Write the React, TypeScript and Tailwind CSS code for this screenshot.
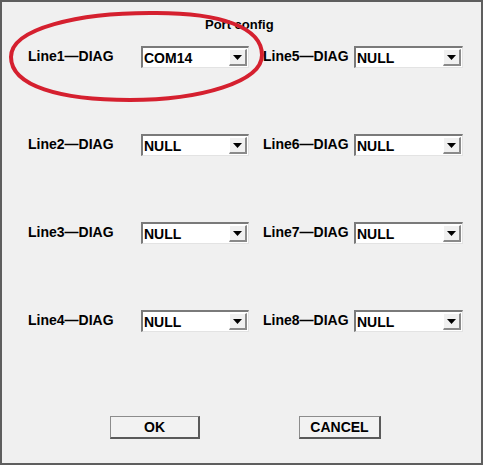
import React from 'react';

const FONT = { fontFamily: '"Liberation Sans", Arial, sans-serif' };

function Combo({ value, width }: { value: string; width: string }) {
  return (
    <div
      className={`${width} h-[22px] flex items-stretch bg-white border-t-2 border-l-2 border-t-[#7a7a7a] border-l-[#7a7a7a] border-b border-r border-b-[#e3e3e3] border-r-[#e3e3e3]`}
    >
      <div className="flex-1 flex items-center pl-[1px] text-[14px] font-bold text-black leading-none">{value}</div>
      <div className="w-[18px] my-[1px] mr-[1px] flex items-center justify-center bg-[#f0f0f0] border-t border-l border-t-white border-l-white border-b-2 border-r-2 border-b-[#8a8a8a] border-r-[#8a8a8a]">
        <svg width="9" height="5" viewBox="0 0 9 5">
          <polygon points="0,0 9,0 4.5,5" fill="#000" />
        </svg>
      </div>
    </div>
  );
}

function Button({ label, width }: { label: string; width: string }) {
  return (
    <div
      className={`${width} h-[23px] flex items-center justify-center bg-[#f2f2f2] border border-[#8c8c8c] border-b-2 border-r-2 border-b-[#5a5a5a] border-r-[#5a5a5a] text-[14px] font-bold text-black`}
    >
      {label}
    </div>
  );
}

const rows = [
  ['Line1', 'COM14', 'Line5', 'NULL'],
  ['Line2', 'NULL', 'Line6', 'NULL'],
  ['Line3', 'NULL', 'Line7', 'NULL'],
  ['Line4', 'NULL', 'Line8', 'NULL'],
];

export default function App() {
  return (
    <div
      className="relative w-[483px] h-[465px] bg-[#f0f0f0] border-2 border-[#5e5e5e] text-black flex flex-col"
      style={FONT}
    >
      <div className="pt-[15px] h-[44px] pl-[203px] text-[13px] font-bold leading-[16px]">Port config</div>

      <div className="flex flex-col gap-[66px]">
        {rows.map(([l1, v1, l2, v2]) => (
          <div key={l1} className="flex items-center h-[22px] pl-[26px]">
            <div className="w-[113px] text-[14px] font-bold leading-none -mt-[3px]">{l1}—DIAG</div>
            <Combo value={v1} width="w-[108px]" />
            <div className="w-[91px] ml-[14px] text-[14px] font-bold leading-none -mt-[3px]">{l2}—DIAG</div>
            <Combo value={v2} width="w-[109px]" />
          </div>
        ))}
      </div>

      <div className="flex pl-[108px] mt-[84px] gap-[99px]">
        <Button label="OK" width="w-[90px]" />
        <Button label="CANCEL" width="w-[82px]" />
      </div>

      {/* red hand-drawn annotation round Line1 */}
      <svg className="absolute left-[-2px] top-[-2px] pointer-events-none" width="483" height="465">
        <path
          d="M 11 57 C 11 28, 80 13, 150 13 C 222 12, 262 28, 262 55 C 262 82, 200 100, 130 100 C 60 100, 11 86, 11 57 Z"
          fill="none"
          stroke="#d5202f"
          strokeWidth="4"
        />
      </svg>
    </div>
  );
}
